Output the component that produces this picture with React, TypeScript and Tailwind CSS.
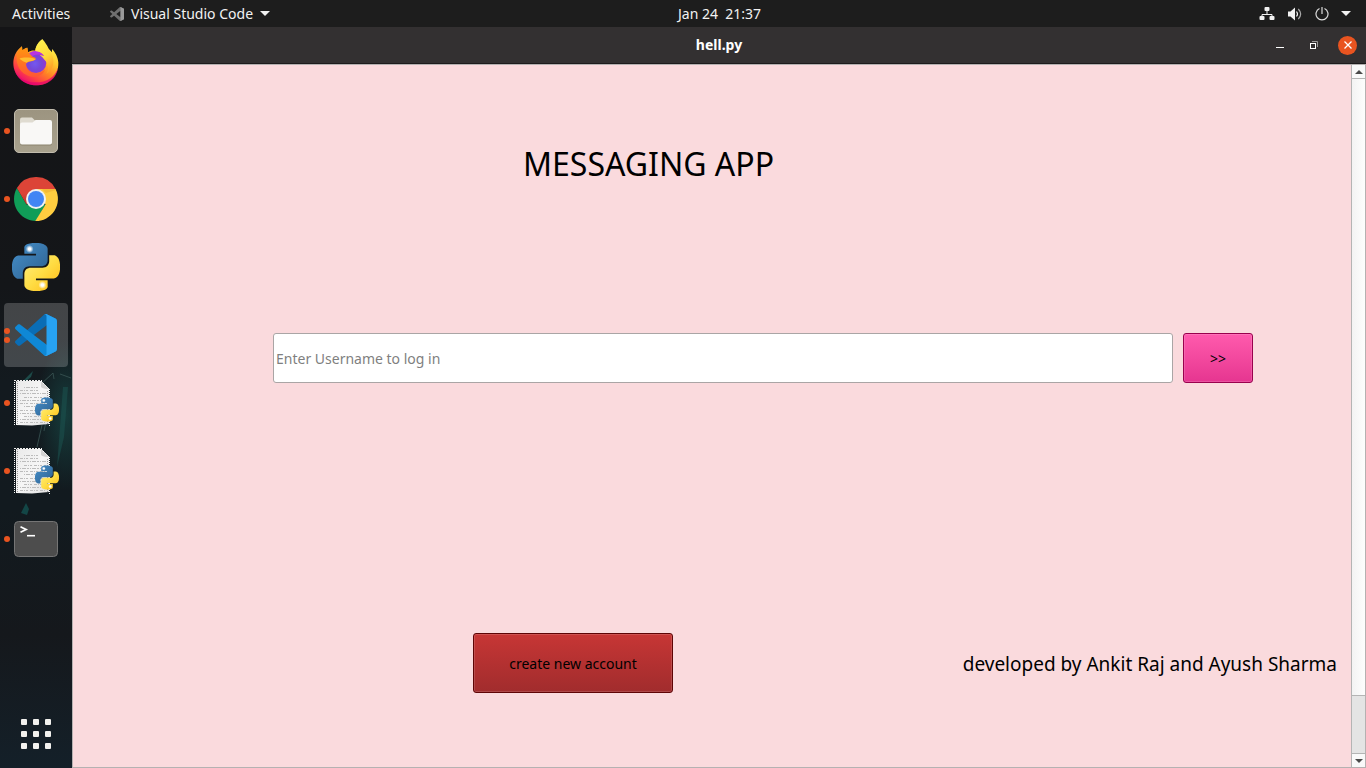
import React from "react";

const PY_BLUE =
  "M14.25.18l.9.2.73.26.59.3.45.32.34.34.25.34.16.33.1.3.04.26.02.2-.01.13V8.5l-.05.63-.13.55-.21.46-.26.38-.3.31-.33.25-.35.19-.35.14-.33.1-.3.07-.26.04-.21.02H8.77l-.69.05-.59.14-.5.22-.41.27-.33.32-.27.35-.2.36-.15.37-.1.35-.07.32-.04.27-.02.21v3.06H3.17l-.21-.03-.28-.07-.32-.12-.35-.18-.36-.26-.36-.36-.35-.46-.32-.59-.28-.73-.21-.88-.14-1.05-.05-1.23.06-1.22.16-1.04.24-.87.32-.71.36-.57.4-.44.42-.33.42-.24.4-.16.36-.1.32-.05.24-.01h.16l.06.01h8.16v-.83H6.18l-.01-2.75-.02-.37.05-.34.11-.31.17-.28.25-.26.31-.23.38-.2.44-.18.51-.15.58-.12.64-.1.71-.06.77-.04.84-.02 1.27.05z";
const PY_YELLOW =
  "M21.04 6.11l.28.06.32.12.35.18.36.27.36.35.35.47.32.59.28.73.21.88.14 1.04.05 1.23-.06 1.23-.16 1.04-.24.86-.32.71-.36.57-.4.45-.42.33-.42.24-.4.16-.36.09-.32.05-.24.02-.16-.01h-8.22v.82h5.84l.01 2.76.02.36-.05.34-.11.31-.17.29-.25.25-.31.24-.38.2-.44.17-.51.15-.58.13-.64.09-.71.07-.77.04-.84.01-1.27-.04-1.07-.14-.9-.2-.73-.25-.59-.3-.45-.33-.34-.34-.25-.34-.16-.33-.1-.3-.04-.25-.02-.2.01-.13v-5.34l.05-.64.13-.54.21-.46.26-.38.3-.32.33-.24.35-.2.35-.14.33-.1.3-.06.26-.04.21-.02.13-.01h5.84l.69-.05.59-.14.5-.21.41-.28.33-.32.27-.35.2-.36.15-.36.1-.35.07-.32.04-.28.02-.21V6.07h2.09z";

function PythonShapes({ id }: { id: string }) {
  return (
    <>
      <defs>
        <linearGradient id={`${id}-b`} x1="0" y1="0" x2="1" y2="1">
          <stop offset="0" stopColor="#4590cc" />
          <stop offset="1" stopColor="#2f608d" />
        </linearGradient>
        <linearGradient id={`${id}-y`} x1="0" y1="0" x2="1" y2="1">
          <stop offset="0" stopColor="#ffee80" />
          <stop offset="0.5" stopColor="#ffdd45" />
          <stop offset="1" stopColor="#ffb914" />
        </linearGradient>
        <radialGradient id={`${id}-e`}>
          <stop offset="0.3" stopColor="#fff" />
          <stop offset="1" stopColor="#fff" stopOpacity="0" />
        </radialGradient>
      </defs>
      <path d={PY_BLUE} fill={`url(#${id}-b)`} />
      <path d={PY_YELLOW} fill={`url(#${id}-y)`} />
      <circle cx="8.8" cy="3" r="2" fill={`url(#${id}-e)`} />
      <circle cx="15.2" cy="21" r="2" fill={`url(#${id}-e)`} />
    </>
  );
}

function FirefoxIcon() {
  return (
    <svg width="48" height="48" viewBox="36 117 144 144" aria-hidden="true">
      <defs>
        <linearGradient id="ff-body" x1="0.85" y1="0.1" x2="0.25" y2="1">
          <stop offset="0" stopColor="#fff44f" />
          <stop offset="0.3" stopColor="#ffc62e" />
          <stop offset="0.55" stopColor="#ff8324" />
          <stop offset="0.78" stopColor="#ff3f45" />
          <stop offset="1" stopColor="#e3007c" />
        </linearGradient>
        <linearGradient id="ff-flame" x1="0.2" y1="0" x2="0.5" y2="1">
          <stop offset="0" stopColor="#fff34e" />
          <stop offset="0.55" stopColor="#ffd93a" />
          <stop offset="1" stopColor="#ff9a25" />
        </linearGradient>
        <radialGradient id="ff-globe" cx="0.45" cy="0.55" r="0.6">
          <stop offset="0" stopColor="#7358f0" />
          <stop offset="0.5" stopColor="#7448d8" />
          <stop offset="1" stopColor="#9a32d0" />
        </radialGradient>
        <linearGradient id="ff-head" x1="0" y1="0" x2="0" y2="1">
          <stop offset="0" stopColor="#ff980e" />
          <stop offset="1" stopColor="#ff5634" />
        </linearGradient>
      </defs>
      <path
        d="M127 118C135 126 141 136 146 146L156 157L156 147C166 157 174 172 175 188C176 229 145 256 108 256C70 256 40 226 40 190C40 172 48 151 66 139L67 151C71 147 77 144 82 143L84 157C91 151 100 151 106 152C107 138 116 126 127 118Z"
        fill="url(#ff-body)"
      />
      <path d="M43 207C52 236 80 248 108 247C140 247 165 231 174 203C170 236 143 256 108 256C75 256 49 234 43 207Z" fill="#e5006f" opacity="0.7" />
      <circle cx="108" cy="188" r="31" fill="url(#ff-globe)" />
      <path d="M85 164C93 150 119 148 133 169C124 162 109 162 99 168Z" fill="#b833e1" />
      <path
        d="M127 118C133 132 147 146 155 163C166 185 159 211 139 222C150 204 143 190 134 180C130 174 125 169 119 165L133 168C128 157 117 154 106 153C107 137 117 125 127 118Z"
        fill="url(#ff-flame)"
      />
      <path
        d="M66 139L67 151C71 147 77 144 82 143L84 157C88 160 93 166 98 170C104 172 109 173 107 178C102 185 86 183 79 190C76 200 82 214 97 220C112 223 126 218 135 208C130 228 104 237 81 226C54 214 46 184 52 160C55 151 60 144 66 139Z"
        fill="url(#ff-head)"
      />
      <path d="M58 176C70 171 90 172 107 177C102 184 88 182 80 188C72 185 66 182 58 176Z" fill="#ffbd2e" />
    </svg>
  );
}

function FilesIcon() {
  return (
    <svg width="48" height="48" viewBox="0 0 48 48" aria-hidden="true">
      <defs>
        <linearGradient id="files-bg" x1="0" y1="0" x2="0" y2="1">
          <stop offset="0" stopColor="#9c9480" />
          <stop offset="1" stopColor="#a8a18d" />
        </linearGradient>
      </defs>
      <rect x="2.5" y="2.5" width="43" height="43" rx="4.5" fill="url(#files-bg)" stroke="#c2bcad" />
      <path d="M8 20V12.500a2 2 0 0 1 2-2h10l3.500 3.500-3 4z" fill="#dfdbd0" />
      <path d="M8 18.500a2 2 0 0 1 2-2h10.500l3-3H38a2 2 0 0 1 2 2V36.500a2 2 0 0 1-2 2H10a2 2 0 0 1-2-2z" fill="#8b846f" />
      <path d="M8 17.500a2 2 0 0 1 2-2h10.500l3-2.500H38a2 2 0 0 1 2 2V35.500a2 2 0 0 1-2 2H10a2 2 0 0 1-2-2z" fill="#f9f8f6" />
    </svg>
  );
}

function ChromeIcon() {
  return (
    <svg width="48" height="48" viewBox="-24 -24 48 48" aria-hidden="true">
      <defs>
        <linearGradient id="cr-r" x1="0" y1="0" x2="0" y2="1">
          <stop offset="0.6" stopColor="#dc4437" />
          <stop offset="1" stopColor="#b93a2d" />
        </linearGradient>
      </defs>
      <path d="M-19.050-11A22 22 0 0 0 0 22L9.530 5.500L-9.530 5.500Z" fill="#109d58" />
      <path d="M19.500-10A22 22 0 0 1-0.700 22L9.530 5.500L0-10Z" fill="#ffcd40" />
      <path d="M-19.050-11A22 22 0 0 1 19.500-10L0-10L-9.530 5.500Z" fill="url(#cr-r)" />
      <path d="M6-10H19.500L20-9L10-6Z" fill="#e9a92d" opacity="0.5" />
      <circle r="10" fill="#f1f1f1" />
      <circle r="8" fill="#4285f4" />
    </svg>
  );
}

function PythonIcon() {
  return (
    <svg width="48" height="48" viewBox="0 0 24 24" aria-hidden="true">
      <PythonShapes id="py-main" />
    </svg>
  );
}

function CodeIcon() {
  return (
    <svg width="42" height="42" viewBox="0 0 100 100" aria-hidden="true">
      <path
        fill="#0a6db5"
        d="M96.461 10.796L75.857.876C73.472-.273 70.622.212 68.750 2.083L1.299 63.583C-.516 65.237-.514 68.094 1.303 69.745L6.813 74.754C8.298 76.104 10.535 76.204 12.134 74.990L93.361 13.370C96.086 11.303 100 13.246 100 16.667V16.427C100 14.026 98.625 11.838 96.461 10.796Z"
      />
      <path
        fill="#0f88d6"
        d="M96.461 89.204L75.857 99.125C73.472 100.273 70.622 99.788 68.750 97.917L1.299 36.417C-.516 34.763-.514 31.906 1.303 30.255L6.813 25.246C8.298 23.896 10.535 23.796 12.134 25.010L93.361 86.630C96.086 88.697 100 86.754 100 83.333V83.573C100 85.974 98.625 88.162 96.461 89.204Z"
      />
      <path
        fill="#27a2f2"
        d="M75.858 99.126C73.472 100.274 70.622 99.789 68.750 97.917C71.056 100.223 75 98.590 75 95.328V4.672C75 1.410 71.056-.223 68.750 2.083C70.622.211 73.472-.274 75.858.874L96.459 10.781C98.623 11.822 100 14.011 100 16.413V83.587C100 85.989 98.623 88.179 96.459 89.220L75.858 99.126Z"
      />
    </svg>
  );
}

function CodeMark() {
  return (
    <svg width="14" height="14" viewBox="0 0 100 100" aria-hidden="true">
      <path
        fill="#6f6f6f"
        fillRule="evenodd"
        d="M70.912 99.317C72.487 99.931 74.283 99.891 75.873 99.126L96.461 89.220C98.624 88.179 100 85.989 100 83.587V16.413C100 14.011 98.624 11.822 96.461 10.781L75.873.874C73.786-.130 71.345.116 69.514 1.447C69.252 1.637 69.003 1.849 68.769 2.083L29.355 38.042L12.187 25.010C10.589 23.797 8.354 23.896 6.869 25.246L1.363 30.255C-.453 31.906-.455 34.763 1.359 36.417L16.247 50L1.359 63.583C-.455 65.237-.453 68.094 1.363 69.745L6.869 74.754C8.354 76.104 10.589 76.204 12.187 74.990L29.355 61.959L68.769 97.917C69.393 98.541 70.125 99.010 70.912 99.317ZM75.015 27.299L45.109 50L75.015 72.701V27.299Z"
      />
      <path fill="#9a9a9a" d="M75 0L96.500 10.800Q100 12.500 100 16.400V83.600Q100 87.500 96.500 89.200L75 99.300Z" />
    </svg>
  );
}

const DOC_LINES = [8, 11, 14, 18, 21, 24, 27, 31, 34, 37, 40, 43];

function ScriptIcon({ id }: { id: string }) {
  return (
    <svg width="48" height="48" viewBox="0 0 48 48" aria-hidden="true">
      <defs>
        <linearGradient id={`${id}-p`} x1="0" y1="0" x2="1" y2="1">
          <stop offset="0" stopColor="#e9e9e9" />
          <stop offset="0.5" stopColor="#f6f6f6" />
          <stop offset="1" stopColor="#e0e0e0" />
        </linearGradient>
      </defs>
      <path d="M4 2H29L37 10V45L20 46.500L4 46Z" fill={`url(#${id}-p)`} />
      <path d="M2.500 1V47M37.500 10V47" stroke="#f3f3f3" strokeDasharray="1 1" fill="none" />
      <path d="M5.500 2V46M35.500 12V46" stroke="#9a9a9a" strokeDasharray="1 1" fill="none" />
      <path d="M2 1.500H30" stroke="#ededed" strokeDasharray="2 1" fill="none" />
      <path d="M29 2V8Q31 10 37 10Z" fill="#d2d2d2" />
      <path d="M29 2L37 10" stroke="#fff" strokeDasharray="2 1" />
      {DOC_LINES.map((y, i) => (
        <path
          key={y}
          d={`M${i % 3 ? 8 : 12} ${y}.5H${i < 2 ? 26 : 34}`}
          stroke="#bcbcbc"
          strokeDasharray={i % 2 ? "3 1 1 1 2 2" : "1 1 4 1 2 1"}
        />
      ))}
      <svg x="23" y="18" width="24" height="25" viewBox="0 0 24 24">
        <PythonShapes id={`${id}-s`} />
      </svg>
    </svg>
  );
}

function TerminalIcon() {
  return (
    <svg width="48" height="48" viewBox="0 0 48 48" aria-hidden="true">
      <rect x="2.500" y="6.500" width="43" height="35" rx="4" fill="#4d4d4d" stroke="#757575" />
      <path d="M8.500 11.800L14 14.500L8.500 17.200" fill="none" stroke="#fff" strokeWidth="1.800" />
      <path d="M15 20.700H23" stroke="#fff" strokeWidth="1.600" />
    </svg>
  );
}

const DOCK = [
  { name: "Firefox", icon: <FirefoxIcon />, windows: 0 },
  { name: "Files", icon: <FilesIcon />, windows: 1 },
  { name: "Google Chrome", icon: <ChromeIcon />, windows: 1 },
  { name: "Python", icon: <PythonIcon />, windows: 0 },
  { name: "Visual Studio Code", icon: <CodeIcon />, windows: 2 },
  { name: "Python script", icon: <ScriptIcon id="sc1" />, windows: 1 },
  { name: "Python script 2", icon: <ScriptIcon id="sc2" />, windows: 1 },
  { name: "Terminal", icon: <TerminalIcon />, windows: 1 },
];

function Caret() {
  return (
    <svg width="10" height="5" viewBox="0 0 10 5" aria-hidden="true">
      <path d="M0 0H10L5 5Z" fill="#f2f2f2" />
    </svg>
  );
}

function TopBar() {
  return (
    <header className="grid h-[27px] shrink-0 grid-cols-[1fr_auto_1fr] items-center bg-[#1d1d1d] text-sm text-[#f2f2f2]">
      <div className="flex items-center pl-3">
        <button type="button" className="w-[98px] text-left">Activities</button>
        <button type="button" className="flex items-center gap-[7px]">
          <CodeMark />
          <span>Visual Studio Code</span>
          <Caret />
        </button>
      </div>
      <button type="button" className="whitespace-pre pl-[73px]">Jan 24  21:37</button>
      <button type="button" aria-label="System menu" className="flex items-center justify-end gap-3 pr-[15px]">
        <svg width="16" height="14" viewBox="0 0 16 14" aria-hidden="true">
          <path d="M8 4V7M3 10V7.500H13V10" fill="none" stroke="#f2f2f2" />
          <rect x="5.500" y="0" width="5" height="4" rx="1" fill="#f2f2f2" />
          <rect x="0.500" y="9" width="5" height="4" rx="1" fill="#f2f2f2" />
          <rect x="10.500" y="9" width="5" height="4" rx="1" fill="#f2f2f2" />
        </svg>
        <svg width="16" height="14" viewBox="0 0 16 14" aria-hidden="true">
          <path d="M1 4.500H3.500L8 0.500V13.500L3.500 9.500H1Z" fill="#f2f2f2" />
          <path d="M9.500 4.500Q11.500 7 9.500 9.500" fill="none" stroke="#f2f2f2" strokeWidth="1.200" />
          <path d="M11.300 2Q16 7 11.300 12.200" fill="none" stroke="#a8a8a8" strokeWidth="1.200" />
        </svg>
        <svg width="14" height="14" viewBox="0 0 14 14" aria-hidden="true">
          <path d="M4.500 1.500A6 6 0 1 0 9.500 1.500" fill="none" stroke="#dcdcdc" strokeWidth="1.200" />
          <path d="M7 0V7" stroke="#dcdcdc" strokeWidth="1.200" />
        </svg>
        <Caret />
      </button>
    </header>
  );
}

function Dock() {
  return (
    <nav
      aria-label="Dock"
      className="relative flex w-[72px] shrink-0 flex-col items-center bg-[linear-gradient(180deg,#141416_0%,#141619_35%,#131a1f_48%,#121a1f_65%,#15181c_82%,#142029_100%)] pt-1"
    >
      <svg className="absolute right-0 top-[300px]" width="72" height="210" viewBox="0 0 72 210" aria-hidden="true">
        <defs>
          <radialGradient id="dock-glow">
            <stop offset="0" stopColor="#17514d" />
            <stop offset="1" stopColor="#17514d" stopOpacity="0" />
          </radialGradient>
        </defs>
        <ellipse cx="66" cy="88" rx="30" ry="75" fill="url(#dock-glow)" opacity="0.6" />
        <path d="M40 58L53 46L54 52M60 47L71 51M44 104L50 76M37 120L42 98" fill="none" stroke="#3a5654" strokeWidth="0.800" />
        <path d="M57 140L63 60L68 60L64 110Z" fill="#1c5551" opacity="0.5" />
        <path d="M22 55L33 44L31 50L25 55Z" fill="#1d4a49" />
        <path d="M21 186L26 176L29 182L27 188Z" fill="#134646" />
      </svg>
      <ul className="relative flex flex-col gap-1">
        {DOCK.map((app) => (
          <li key={app.name}>
            <button
              type="button"
              aria-label={app.name}
              className={
                app.windows === 2
                  ? "relative flex size-16 items-center justify-center rounded bg-white/20"
                  : "relative flex size-16 items-center justify-center"
              }
            >
              <span className="absolute inset-y-0 left-0 flex flex-col justify-center gap-[3px]">
                {Array.from({ length: app.windows }, (_, i) => (
                  <span key={i} className="size-[6px] rounded-full bg-[#e95420]" />
                ))}
              </span>
              {app.icon}
            </button>
          </li>
        ))}
      </ul>
      <button type="button" aria-label="Show Applications" className="relative mb-[19px] mt-auto grid grid-cols-3 gap-[6px]">
        {Array.from({ length: 9 }, (_, i) => (
          <span key={i} className="size-[6px] rounded-[1px] bg-[#f2f1ee]" />
        ))}
      </button>
    </nav>
  );
}

function TitleBar() {
  return (
    <div className="grid h-[37px] shrink-0 grid-cols-[1fr_auto_1fr] items-center border-b border-[#1d1b1c] bg-[#333031]">
      <span />
      <h2 className="text-sm font-bold text-white">hell.py</h2>
      <div className="flex items-center justify-end gap-[14px] pr-[9px]">
        <button type="button" aria-label="Minimize" className="flex size-5 items-center justify-center">
          <svg width="8" height="8" viewBox="0 0 8 8" aria-hidden="true">
            <path d="M0 6.500H8" stroke="#fff" />
          </svg>
        </button>
        <button type="button" aria-label="Restore" className="flex size-5 items-center justify-center">
          <svg width="8" height="8" viewBox="0 0 8 8" aria-hidden="true">
            <rect x="0.500" y="2.500" width="5" height="5" fill="none" stroke="#fff" />
            <path d="M2 0.500H7.500V6" fill="none" stroke="#9b9999" />
          </svg>
        </button>
        <button type="button" aria-label="Close" className="flex size-[19px] items-center justify-center rounded-full bg-[#e95420]">
          <svg width="8" height="8" viewBox="0 0 8 8" aria-hidden="true">
            <path d="M0.500 0.500L7.500 7.500M7.500 0.500L0.500 7.500" stroke="#fff" strokeWidth="1.300" />
          </svg>
        </button>
      </div>
    </div>
  );
}

function ScrollBar() {
  return (
    <div className="flex w-[14px] shrink-0 flex-col border-l border-[#b4b4b4] bg-[#e4e4e4]">
      <button type="button" aria-label="Scroll up" className="flex h-[14px] items-center justify-center border-b border-[#b4b4b4] bg-[#f9f9f9]">
        <svg width="8" height="4" viewBox="0 0 8 4" aria-hidden="true">
          <path d="M0 4L4 0L8 4Z" fill="#4a4a4a" />
        </svg>
      </button>
      <div className="flex-1 border-b border-[#b4b4b4] bg-linear-to-r from-[#f3f3f3] to-[#fdfdfd]" />
      <div className="h-[57px]" />
      <button type="button" aria-label="Scroll down" className="flex h-[14px] items-center justify-center border-t border-[#b4b4b4] bg-[#f9f9f9]">
        <svg width="8" height="4" viewBox="0 0 8 4" aria-hidden="true">
          <path d="M0 0L4 4L8 0Z" fill="#4a4a4a" />
        </svg>
      </button>
    </div>
  );
}

export default function App() {
  return (
    <div className="flex min-h-screen flex-col font-['Noto_Sans','Open_Sans',sans-serif]">
      <TopBar />
      <div className="flex flex-1">
        <Dock />
        <section className="flex min-w-0 flex-1 flex-col">
          <TitleBar />
          <div className="flex flex-1 border border-[#b5b1b1]">
            <main className="min-w-0 flex-1 bg-[#fadadd] pb-[74px] pt-[74px] text-black">
              <h1 className="pl-[450px] text-[32px] leading-[50px]">MESSAGING APP</h1>
              <form className="mt-[144px] flex gap-[10px] pl-[200px] pr-[98px]" onSubmit={(e) => e.preventDefault()}>
                <input
                  type="text"
                  aria-label="Username"
                  placeholder="Enter Username to log in"
                  className="h-[50px] min-w-0 flex-1 rounded-[3px] border border-[#aaa5a5] bg-white px-[2px] text-sm outline-none placeholder:text-[#7f7f7f]"
                />
                <button
                  type="submit"
                  className="h-[50px] w-[70px] rounded-[3px] border border-[#99004d] bg-linear-to-b from-[#ff5aad] to-[#e63590] pt-[2px] text-sm shadow-[inset_0_0_0_1px_rgba(255,255,255,0.15)]"
                >
                  &gt;&gt;
                </button>
              </form>
              <div className="mt-[250px] flex items-center justify-between pl-[400px] pr-[14px]">
                <button
                  type="button"
                  className="h-[60px] w-[200px] rounded-[3px] border border-[#5e0405] bg-linear-to-b from-[#c73635] to-[#a12c2d] pt-[2px] text-sm shadow-[inset_0_0_0_1px_rgba(255,255,255,0.14)]"
                >
                  create new account
                </button>
                <p className="pt-[2px] text-[19px]">developed by Ankit Raj and Ayush Sharma</p>
              </div>
            </main>
            <ScrollBar />
          </div>
        </section>
      </div>
    </div>
  );
}
